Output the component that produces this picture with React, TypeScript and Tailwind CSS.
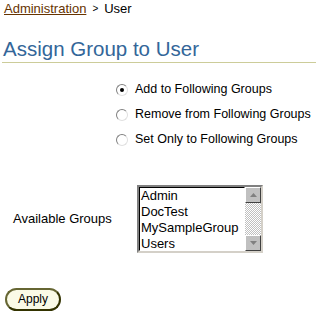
import React from 'react';

const groups = ['Admin', 'DocTest', 'MySampleGroup', 'Users'];

const options = [
    { label: 'Add to Following Groups', checked: true },
    { label: 'Remove from Following Groups', checked: false },
    { label: 'Set Only to Following Groups', checked: false },
];

const Radio: React.FC<{ checked: boolean }> = ({ checked }) => (
    <span className="shrink-0 inline-flex w-[12px] h-[12px] rounded-full border border-t-[#808080] border-l-[#808080] border-r-[#e0e0e0] border-b-[#e0e0e0] bg-white items-center justify-center">
        {checked && <span className="w-[4px] h-[4px] rounded-full bg-black" />}
    </span>
);

const ScrollButton: React.FC<{ up?: boolean }> = ({ up }) => (
    <div className="w-[16px] h-[16px] bg-[#c0c0c0] border border-t-white border-l-white border-r-[#404040] border-b-[#404040] flex items-center justify-center">
        <svg width="7" height="4" viewBox="0 0 7 4">
            {up ? <path d="M3.5 0L7 4H0z" fill="#808080" /> : <path d="M0 0h7L3.5 4z" fill="#808080" />}
        </svg>
    </div>
);

export default function App() {
    return (
        <div className="w-[316px] h-[318px] bg-white font-['Liberation_Sans',Arial,sans-serif] text-black overflow-hidden">
            {/* Breadcrumb */}
            <div className="pl-[4px] pt-[1px] text-[13px] leading-[15px] flex gap-[6px]">
                <a className="text-[#663300] underline">Administration</a>
                <span className="text-[10px]">&gt;</span>
                <span>User</span>
            </div>

            {/* Title */}
            <h1 className="mt-[21px] ml-[3px] text-[20.5px] leading-[24px] text-[#336699]">Assign Group to User</h1>
            <div className="mt-[1px] ml-[2px] h-[1px] bg-[#cccc99]" />

            {/* Action radios */}
            <div className="mt-[19px] pl-[116px] flex flex-col gap-[10px] text-[12.5px] leading-[15px] whitespace-nowrap">
                {options.map((o) => (
                    <label key={o.label} className="flex items-center gap-[7px]">
                        <Radio checked={o.checked} />
                        <span>{o.label}</span>
                    </label>
                ))}
            </div>

            {/* Available groups */}
            <div className="mt-[38px] flex items-center">
                <span className="w-[137px] shrink-0 pl-[13px] text-[13px]">Available Groups</span>
                <div className="w-[126px] h-[68px] shrink-0 border-2 border-t-[#808080] border-l-[#808080] border-r-[#d4d0c8] border-b-[#d4d0c8] flex">
                    <div className="flex-1 min-w-0 overflow-hidden bg-white text-[13px] leading-[16px] pl-[1px] border border-t-black border-l-black border-r-white border-b-white whitespace-nowrap">
                        {groups.map((g) => (
                            <div key={g}>{g}</div>
                        ))}
                    </div>
                    <div className="w-[16px] flex flex-col">
                        <ScrollButton up />
                        <div className="flex-1 bg-[repeating-conic-gradient(#c0c0c0_0_25%,#fff_0_50%)] bg-[length:2px_2px]" />
                        <ScrollButton />
                    </div>
                </div>
            </div>

            {/* Apply */}
            <div className="mt-[33px] pl-[5px]">
                <button className="w-[56px] h-[23px] rounded-full border-2 border-[#666633] border-r-[#333300] border-b-[#333300] bg-[#fafae6] text-[12px] leading-[14px]">
                    Apply
                </button>
            </div>
        </div>
    );
}
